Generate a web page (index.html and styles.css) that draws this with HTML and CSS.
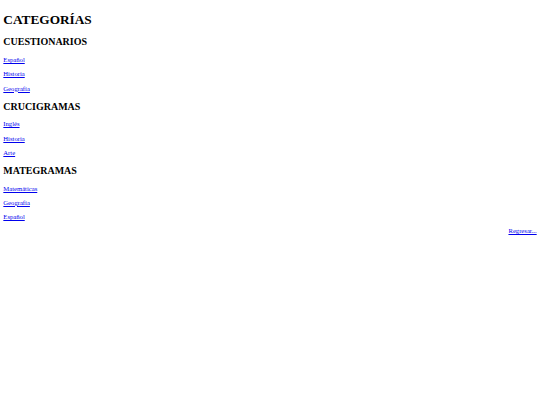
FILE: index.html
```html
<!DOCTYPE html>
<html lang="es">
<head>
<meta charset="utf-8">
<title>Categorías</title>
<link rel="stylesheet" href="styles.css">
</head>
<body class="page">
<h1 class="title">CATEGORÍAS</h1>
<h2 class="section">CUESTIONARIOS</h2>
<p class="item"><a class="link" href="#">Español</a></p>
<p class="item"><a class="link" href="#">Historia</a></p>
<p class="item"><a class="link" href="#">Geografía</a></p>
<h2 class="section">CRUCIGRAMAS</h2>
<p class="item"><a class="link" href="#">Inglés</a></p>
<p class="item"><a class="link" href="#">Historia</a></p>
<p class="item"><a class="link" href="#">Arte</a></p>
<h2 class="section">MATEGRAMAS</h2>
<p class="item"><a class="link" href="#">Matemáticas</a></p>
<p class="item"><a class="link" href="#">Geografía</a></p>
<p class="item"><a class="link" href="#">Español</a></p>
<p class="item back"><a class="link" href="#">Regresar...</a></p>
</body>
</html>
```
FILE: styles.css
```css
html {
  background: #fff;
}
.page {
  margin: 3.33px;
  font-family: "Liberation Serif", "Times New Roman", serif;
  font-size: 6.656px;
  line-height: 1.149;
  color: #000;
}
.title {
  font-size: 2em;
  line-height: 1.149;
  font-weight: bold;
  margin: 0.67em 0;
}
.section {
  font-size: 1.5em;
  line-height: 1.149;
  font-weight: bold;
  margin: 0.83em 0;
}
.item {
  margin: 1em 0;
  line-height: 1.149;
}
.back {
  text-align: right;
}
.link {
  color: #0000ee;
  text-decoration: underline;
}
```
